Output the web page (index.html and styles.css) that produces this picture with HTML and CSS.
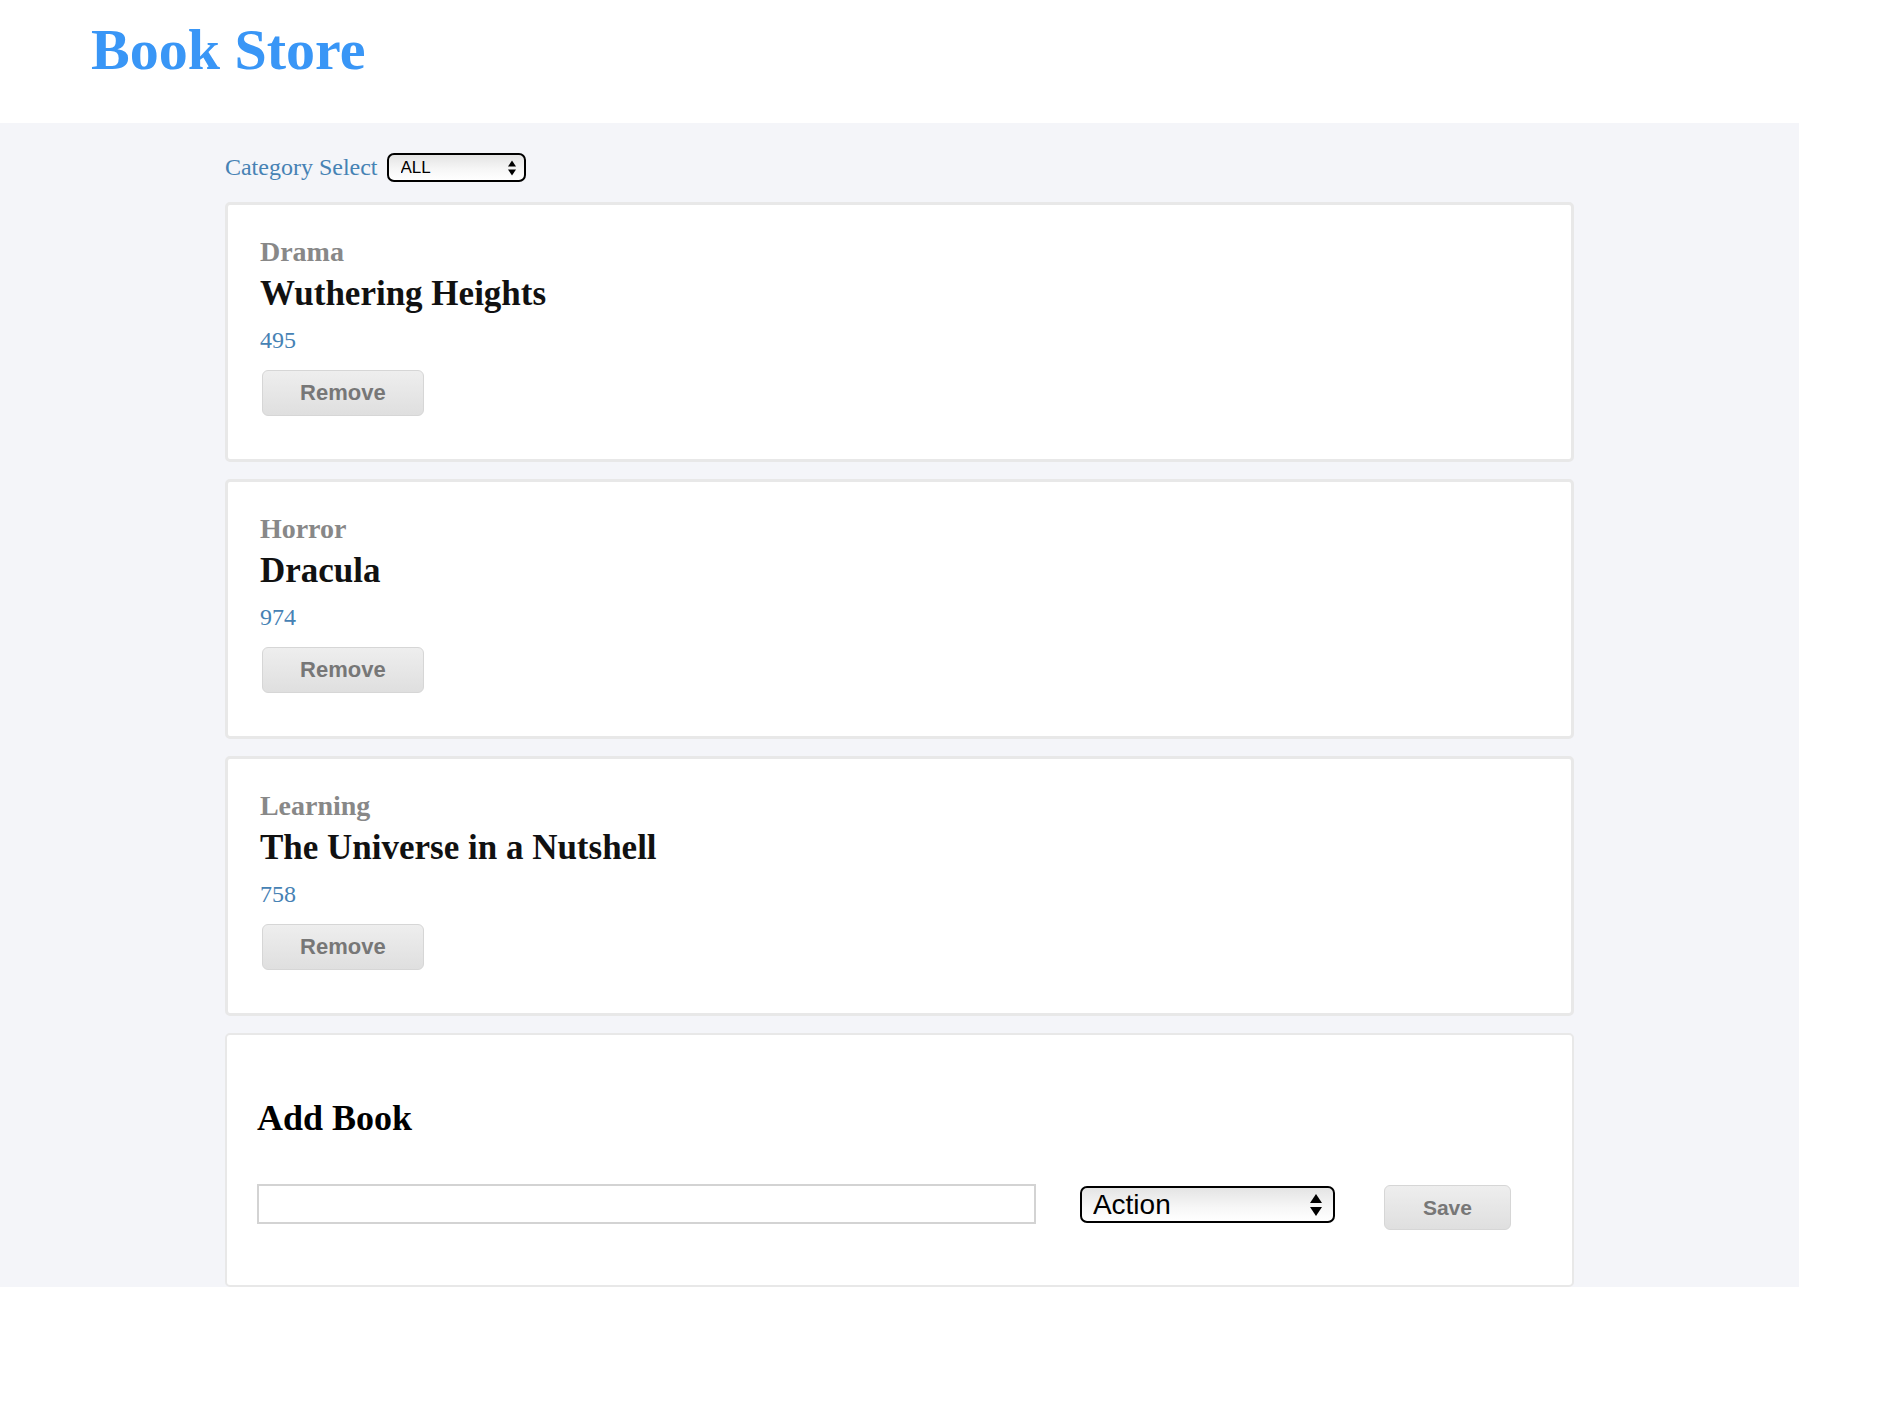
FILE: index.html
```html
<!DOCTYPE html>
<html lang="en">
<head>
	<meta charset="UTF-8">
	<title>Book Store</title>
	<link rel="stylesheet" href="styles.css">
</head>
<body>

	<header class="top">
		<h1 class="brand">Book Store</h1>
	</header>

	<main class="shelf">
		<div class="shelf-inner">

			<div class="filter">
				<label class="filter-label" for="category">Category Select</label>
				<span class="picker picker-sm">
					<select id="category">
						<option>ALL</option>
						<option>Action</option>
						<option>Drama</option>
						<option>Horror</option>
						<option>Learning</option>
					</select>
					<svg class="picker-arrows" width="8" height="16" viewBox="0 0 8 16">
						<polygon points="0,6.5 4,0.5 8,6.5"/>
						<polygon points="0,9.5 4,15.5 8,9.5"/>
					</svg>
				</span>
			</div>

			<div class="book">
				<p class="book-cat">Drama</p>
				<h3 class="book-title">Wuthering Heights</h3>
				<p class="book-price">495</p>
				<button class="btn btn-remove">Remove</button>
			</div>

			<div class="book">
				<p class="book-cat">Horror</p>
				<h3 class="book-title">Dracula</h3>
				<p class="book-price">974</p>
				<button class="btn btn-remove">Remove</button>
			</div>

			<div class="book">
				<p class="book-cat">Learning</p>
				<h3 class="book-title">The Universe in a Nutshell</h3>
				<p class="book-price">758</p>
				<button class="btn btn-remove">Remove</button>
			</div>

			<div class="add-book">
				<h2 class="add-title">Add Book</h2>
				<div class="add-row">
					<input class="add-name" type="text">
					<span class="picker picker-lg">
						<select>
							<option>Action</option>
							<option>Drama</option>
							<option>Horror</option>
							<option>Learning</option>
						</select>
						<svg class="picker-arrows" width="12" height="24" viewBox="0 0 12 24">
							<polygon points="0,10 6,1 12,10"/>
							<polygon points="0,14 6,23 12,14"/>
						</svg>
					</span>
					<button class="btn btn-save">Save</button>
				</div>
			</div>

		</div>
	</main>

</body>
</html>
```

FILE: styles.css
```css
body{
	margin: 0;
	background: #fff;
	font-family: "Liberation Serif", "Times New Roman", serif;
}
p, h1, h2, h3{
	margin: 0;
}

/* header */
.top{
	height: 123px;
	box-sizing: border-box;
	padding: 17px 0 0 91px;
}
.brand{
	font-size: 58px;
	line-height: 66px;
	font-weight: bold;
	color: #3996f6;
}

/* grey area */
.shelf{
	width: 94.5%;
	padding-top: 30px;
	background: #f4f5f9;
	box-sizing: border-box;
}
.shelf-inner{
	width: 75%;
	margin: 0 auto;
}

.filter{
	display: flex;
	align-items: center;
	gap: 9px;
	height: 29px;
	margin-bottom: 20px;
}
.filter-label{
	font-size: 24px;
	color: #4682b4;
}

/* selects */
.picker{
	position: relative;
	display: inline-block;
}
.picker select{
	-webkit-appearance: none;
	appearance: none;
	display: block;
	margin: 0;
	box-sizing: border-box;
	border: 2px solid #000;
	border-radius: 7px;
	background: linear-gradient(to bottom, #e4e4e4, #f7f7f7 60%, #fff);
	color: #000;
	font-family: "Liberation Sans", Arial, sans-serif;
	outline: none;
}
.picker-arrows{
	position: absolute;
	top: 50%;
	transform: translateY(-50%);
	pointer-events: none;
	fill: #000;
}
.picker-sm select{
	width: 139px;
	height: 29px;
	padding: 0 0 0 12px;
	font-size: 17px;
}
.picker-sm .picker-arrows{
	right: 10px;
}
.picker-lg{
	margin: 2px 0 0 44px;
}
.picker-lg select{
	width: 255px;
	height: 37px;
	padding: 0 0 0 11px;
	font-size: 28px;
}
.picker-lg .picker-arrows{
	right: 13px;
}

/* book cards */
.book{
	background: #fff;
	border: 3px solid #e8e8e8;
	border-radius: 5px;
	padding: 31px 32px 43px;
	margin-bottom: 17px;
}
.book-cat{
	font-size: 28px;
	line-height: 32px;
	font-weight: bold;
	color: #888;
}
.book-title{
	margin-top: 6px;
	font-size: 35px;
	line-height: 40px;
	font-weight: bold;
	color: #111;
}
.book-price{
	margin-top: 12px;
	font-size: 24px;
	line-height: 28px;
	color: #4682b4;
}

/* buttons */
.btn{
	display: block;
	margin: 0;
	padding: 0;
	box-sizing: border-box;
	border: 1px solid #d6d6d6;
	border-radius: 6px;
	background: linear-gradient(to bottom, #eeeeee, #dfdfdf);
	color: #777;
	font-family: "Liberation Sans", Arial, sans-serif;
	font-weight: bold;
	cursor: pointer;
}
.btn-remove{
	width: 162px;
	height: 46px;
	margin: 16px 0 0 2px;
	font-size: 22px;
}
.btn-save{
	width: 127px;
	height: 45px;
	margin: 1px 0 0 49px;
	font-size: 21px;
}

/* add form */
.add-book{
	background: #fff;
	border: 2px solid #e8e8e8;
	border-radius: 5px;
	padding: 63px 30px 55px;
}
.add-title{
	font-size: 36px;
	line-height: 40px;
	font-weight: bold;
	color: #000;
}
.add-row{
	display: flex;
	align-items: flex-start;
	margin-top: 46px;
}
.add-name{
	width: 779px;
	height: 40px;
	margin: 0;
	padding: 0 6px;
	box-sizing: border-box;
	border: 2px solid #d3d3d3;
	border-radius: 0;
	font-size: 20px;
	outline: none;
}
```
